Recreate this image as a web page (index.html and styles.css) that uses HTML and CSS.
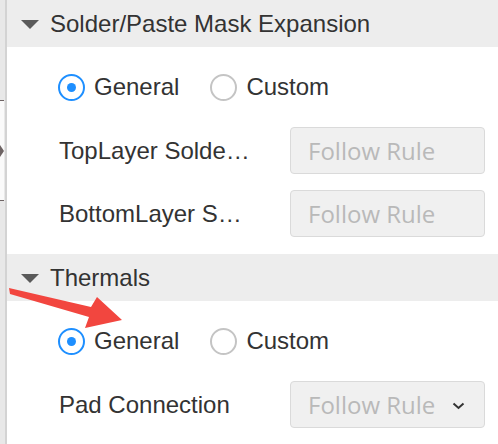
FILE: index.html
```html
<!DOCTYPE html>
<html>
<head>
<meta charset="utf-8">
<link rel="stylesheet" href="styles.css">
</head>
<body>
<div class="app">
  <div class="strip">
    <div class="strip-box"><span class="strip-tri"></span></div>
  </div>
  <div class="panel">
    <div class="section-head"><span class="caret"></span><span class="head-title">Solder/Paste Mask Expansion</span></div>
    <div class="section-body">
      <div class="radio-row">
        <label class="opt"><span class="radio checked"></span><span>General</span></label>
        <label class="opt"><span class="radio"></span><span>Custom</span></label>
      </div>
      <div class="form-row">
        <span class="label" title="TopLayer Solder Mask Expansion">TopLayer Solder Mask Expansion</span>
        <div class="field">Follow Rule</div>
      </div>
      <div class="form-row">
        <span class="label" title="BottomLayer Solder Mask Expansion">BottomLayer Solder Mask Expansion</span>
        <div class="field">Follow Rule</div>
      </div>
    </div>
    <div class="section-head"><span class="caret"></span><span class="head-title">Thermals</span></div>
    <div class="section-body">
      <div class="radio-row">
        <label class="opt"><span class="radio checked"></span><span>General</span></label>
        <label class="opt"><span class="radio"></span><span>Custom</span></label>
      </div>
      <div class="form-row">
        <span class="label">Pad Connection</span>
        <div class="field select">Follow Rule
          <svg class="chev" width="13" height="8" viewBox="0 0 13 8"><path d="M1.5 1.5 L6.5 6 L11.5 1.5" fill="none" stroke="#333" stroke-width="2"/></svg>
        </div>
      </div>
    </div>
  </div>
</div>
<svg class="arrow" width="498" height="444" viewBox="0 0 498 444">
  <polygon points="9,288 91,307 97,297 122,320 85,328 89,317 10,294" fill="#f2463f"/>
</svg>
</body>
</html>
```
FILE: styles.css
```css
html, body {
  margin: 0;
  padding: 0;
  background: #fff;
}
body {
  width: 498px;
  height: 444px;
  overflow: hidden;
  position: relative;
  font-family: "Liberation Sans", Arial, sans-serif;
  font-size: 24px;
  color: #333;
}
.app {
  display: flex;
  height: 444px;
}
.strip {
  width: 5px;
  flex: none;
  background: #e8e8e8;
  border-right: 2px solid #d3d3d3;
}
.strip-box {
  margin-top: 100px;
  height: 99px;
  width: 4px;
  background: #fafafa;
  border-top: 1px solid #6e6464;
  border-bottom: 1px solid #6e6464;
  display: flex;
  align-items: center;
}
.strip-tri {
  width: 0;
  height: 0;
  border-top: 6px solid transparent;
  border-bottom: 6px solid transparent;
  border-left: 4px solid #6e6464;
}
.panel {
  flex: 1;
  min-width: 0;
}
.section-head {
  height: 47px;
  background: #ededed;
  display: flex;
  align-items: center;
  padding-left: 14px;
  gap: 11px;
}
.caret {
  width: 0;
  height: 0;
  border-left: 9px solid transparent;
  border-right: 9px solid transparent;
  border-top: 9px solid #5a5a5a;
  margin-top: 2px;
}
.head-title {
  line-height: 1;
}
.section-body {
  padding: 16px 13px 17px 51px;
  display: flex;
  flex-direction: column;
  gap: 16px;
}
.radio-row {
  height: 48px;
  display: flex;
  align-items: center;
  gap: 31px;
}
.opt {
  display: flex;
  align-items: center;
  gap: 9px;
}
.radio {
  width: 27px;
  height: 27px;
  box-sizing: border-box;
  border: 2px solid #c4c4c4;
  border-radius: 50%;
  display: flex;
  align-items: center;
  justify-content: center;
}
.radio.checked {
  border-color: #1e8fff;
}
.radio.checked::after {
  content: "";
  width: 9px;
  height: 9px;
  border-radius: 50%;
  background: #1e8fff;
}
.form-row {
  height: 47px;
  display: flex;
  align-items: center;
}
.label {
  width: 194px;
  flex: none;
  white-space: nowrap;
  overflow: hidden;
  text-overflow: ellipsis;
  padding-left: 1px;
}
.field {
  margin-left: auto;
  width: 195px;
  height: 47px;
  box-sizing: border-box;
  border: 1px solid #dadada;
  border-radius: 4px;
  background: #f0f0f0;
  padding-left: 17px;
  padding-right: 19px;
  display: flex;
  align-items: center;
  justify-content: space-between;
  font-family: "Open Sans", sans-serif;
  font-size: 24px;
  color: #b9b9b9;
}
.chev {
  margin-top: 2px;
}
.arrow {
  position: absolute;
  left: 0;
  top: 0;
  pointer-events: none;
}
```
